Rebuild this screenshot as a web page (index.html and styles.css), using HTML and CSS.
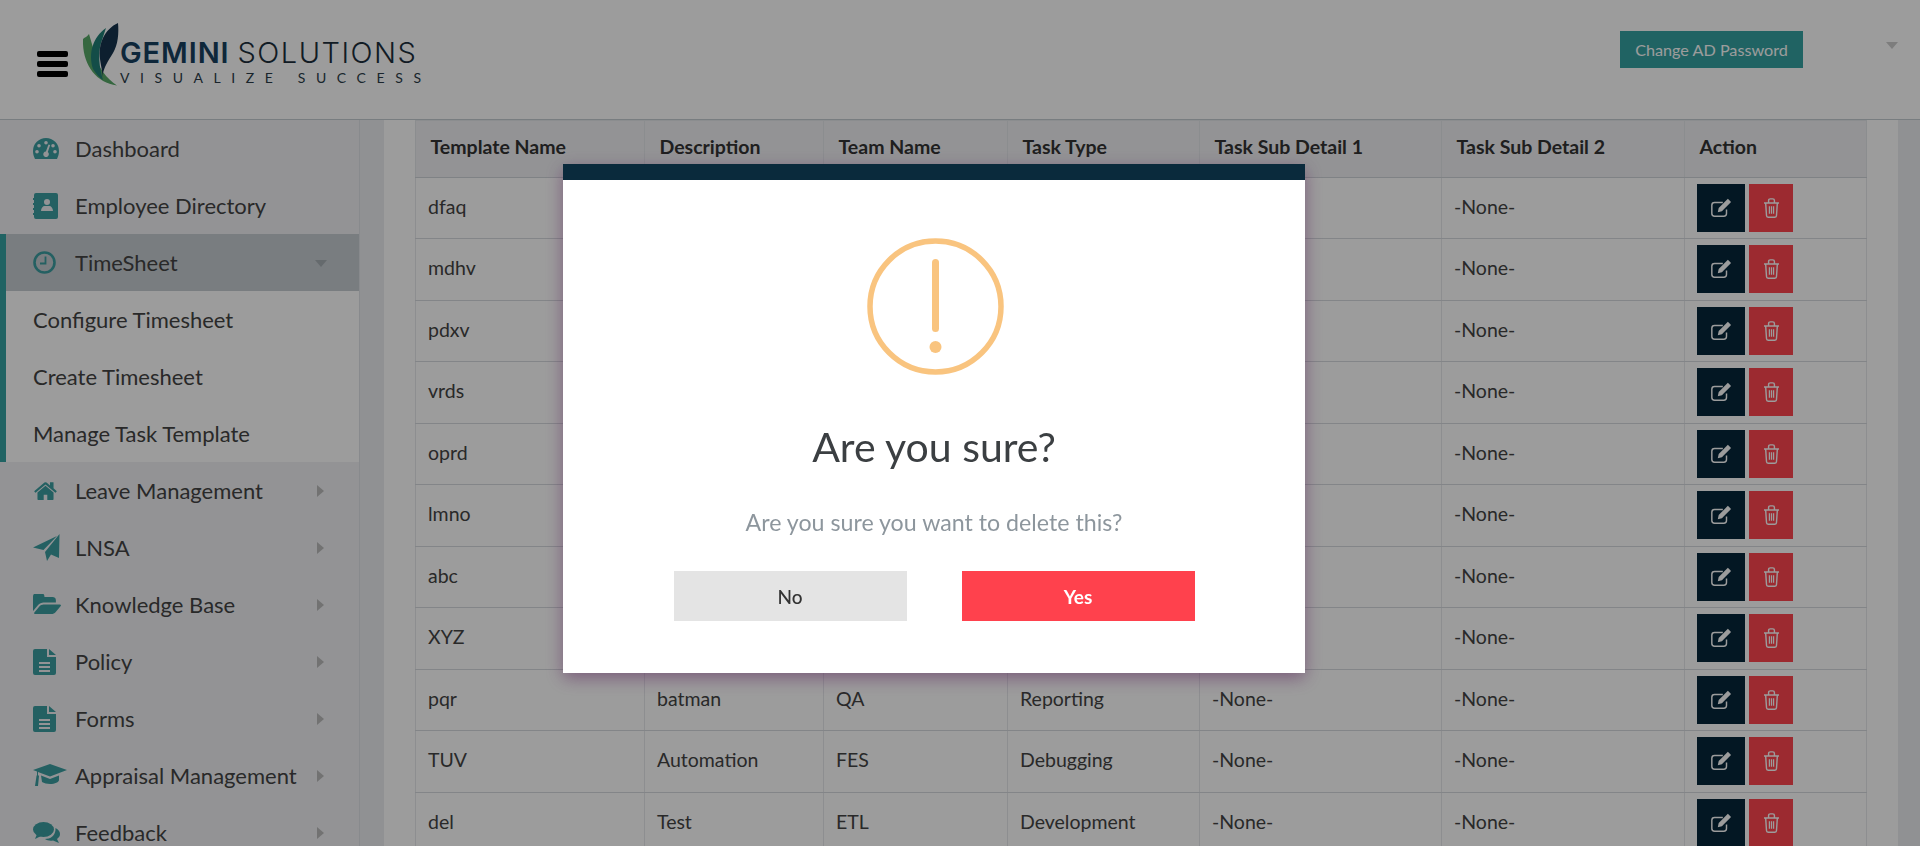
FILE: index.html
```html
<!DOCTYPE html>
<html lang="en">
<head>
  <meta charset="UTF-8">
  <title>Manage Task Template</title>
  <link rel="stylesheet" href="styles.css">
</head>
<body>
  <svg class="sprite" xmlns="http://www.w3.org/2000/svg">
    <symbol id="i-edit" viewBox="0 0 24 24">
      <path d="M18 13.500v4.500a3 3 0 0 1-3 3H5a3 3 0 0 1-3-3V9a3 3 0 0 1 3-3h9" fill="none" stroke="currentColor" stroke-width="1.600"/>
      <path d="M19.500 2l3.500 3.500L13 15.500l-4.500 1 1-4.500z" fill="currentColor"/>
    </symbol>
    <symbol id="i-trash" viewBox="0 0 20 24">
      <path d="M1 6h18M3 6l1 15a2 2 0 0 0 2 2h8a2 2 0 0 0 2-2l1-15M6.500 6V3a2 2 0 0 1 2-2h3a2 2 0 0 1 2 2v3" fill="none" stroke="currentColor" stroke-width="1.700"/>
      <path d="M7.500 10v9M10 10v9M12.500 10v9" fill="none" stroke="currentColor" stroke-width="1.500"/>
    </symbol>
    <symbol id="i-doc" viewBox="0 0 23 26">
      <path d="M2 0h12v8h9v16a2 2 0 0 1-2 2H2a2 2 0 0 1-2-2V2a2 2 0 0 1 2-2zM16 0l7 6h-7zM6 13v2h11v-2zM6 17v2h11v-2zM6 21v2h11v-2z" fill="currentColor" fill-rule="evenodd"/>
    </symbol>
  </svg>

  <header class="topbar">
    <div class="burger"><span></span><span></span><span></span></div>
    <div class="logo">
      <svg class="logo-mark" viewBox="0 0 36 64" xmlns="http://www.w3.org/2000/svg">
        <path d="M0 16C-1 40 12 60 34 62.500C24 56 14 44 11 28L6 11C4 14 2 14 0 16z" fill="#58a868"/>
        <path d="M23 5C10 14 5 30 10 46C13 51 17 55 20 57C16 44 15 30 18 20z" fill="#1f7f76"/>
        <path d="M35 0C22 6 15 20 17 36C18 44 20 49 19 54C21 44 25 38 30 30C35 22 36 10 35 0z" fill="#16344e"/>
      </svg>
      <div class="logo-text">
        <div class="logo-name"><b>GEMINI</b><span>SOLUTIONS</span></div>
        <div class="logo-tag">VISUALIZE SUCCESS</div>
      </div>
    </div>
    <a class="ad-btn">Change AD Password</a>
    <span class="user-caret"></span>
  </header>

  <div class="content">
    <nav class="sidebar">
      <a class="nav-item">
        <span class="nav-icon"><svg width="26" height="21" viewBox="0 0 26 21"><path d="M13 0a13 13 0 0 1 13 13c0 3-.8 5.500-2 8H2c-1.200-2.500-2-5-2-8A13 13 0 0 1 13 0zM13 3a1.800 1.800 0 1 0 0 3.600A1.800 1.800 0 0 0 13 3zM6 6a1.800 1.800 0 1 0 0 3.600A1.800 1.800 0 0 0 6 6zM20 6a1.800 1.800 0 1 0 0 3.600A1.800 1.800 0 0 0 20 6zM4 12a1.800 1.800 0 1 0 0 3.600A1.800 1.800 0 0 0 4 12zM22 12a1.800 1.800 0 1 0 0 3.600A1.800 1.800 0 0 0 22 12zM15.500 6.500l-2.600 7a2.800 2.800 0 1 0 1.900.6l2.400-7z" fill="currentColor" fill-rule="evenodd"/></svg></span>
        Dashboard
      </a>
      <a class="nav-item">
        <span class="nav-icon"><svg width="25" height="26" viewBox="0 0 25 26"><path d="M3 0h20a2 2 0 0 1 2 2v22a2 2 0 0 1-2 2H3a2 2 0 0 1-2-2v-2H0v-2h1v-3H0v-2h1v-3H0V10h1V7H0V5h1V2a2 2 0 0 1 2-2zM14 6a3 3 0 1 0 0 6a3 3 0 0 0 0-6zM8 18h12c0-3-2-5-3.500-5h-5C10 13 8 15 8 18z" fill="currentColor" fill-rule="evenodd"/></svg></span>
        Employee Directory
      </a>
      <a class="nav-item nav-active has-bar">
        <span class="nav-icon"><svg width="23" height="23" viewBox="0 0 23 23"><circle cx="11.500" cy="11.500" r="10" fill="none" stroke="currentColor" stroke-width="2.600"/><path d="M12.500 5.500v7H7" fill="none" stroke="currentColor" stroke-width="1.800"/></svg></span>
        TimeSheet
        <span class="caret-down"></span>
      </a>
      <a class="nav-sub has-bar">Configure Timesheet</a>
      <a class="nav-sub has-bar">Create Timesheet</a>
      <a class="nav-sub has-bar">Manage Task Template</a>
      <a class="nav-item">
        <span class="nav-icon"><svg width="25" height="20" viewBox="0 0 1792 1430"><path transform="translate(0 -170)" d="M1472 992v480q0 26-19 45t-45 19h-384v-384h-256v384h-384q-26 0-45-19t-19-45v-480q0-1 .5-3t.5-3l575-474 575 474q1 2 1 6zm223-69l-62 74q-8 9-21 11h-3q-13 0-21-7l-692-577-692 577q-12 8-24 7-13-2-21-11l-62-74q-8-10-7-23.500t11-21.500l719-599q32-26 76-26t76 26l244 204v-195q0-14 9-23t23-9h192q14 0 23 9t9 23v408l219 182q10 8 11 21.500t-7 23.500z" fill="currentColor"/></svg></span>
        Leave Management
        <span class="caret-right"></span>
      </a>
      <a class="nav-item">
        <span class="nav-icon"><svg width="27" height="27" viewBox="0 0 27 27"><path d="M26.500 0L26 24l-8-3.500-4 6.500-2-9zM24 2L10.500 16 0 13.500z" fill="currentColor"/></svg></span>
        LNSA
        <span class="caret-right"></span>
      </a>
      <a class="nav-item">
        <span class="nav-icon"><svg width="28" height="21" viewBox="0 0 1880 1410"><path transform="translate(0 -190)" d="M1879 952q0 31-31 66l-336 396q-43 51-120.500 86.500t-143.500 35.500h-1088q-34 0-60.500-13t-26.500-43q0-31 31-66l336-396q43-51 120.500-86.500t143.500-35.500h1088q34 0 60.500 13t26.500 43zm-343-344v160h-832q-94 0-197 47.500t-164 119.500l-337 396-5 6q0-4-.5-12.500t-.5-12.500v-960q0-92 66-158t158-66h320q92 0 158 66t66 158v32h544q92 0 158 66t66 158z" fill="currentColor"/></svg></span>
        Knowledge Base
        <span class="caret-right"></span>
      </a>
      <a class="nav-item">
        <span class="nav-icon"><svg width="23" height="26"><use href="#i-doc"/></svg></span>
        Policy
        <span class="caret-right"></span>
      </a>
      <a class="nav-item">
        <span class="nav-icon"><svg width="23" height="26"><use href="#i-doc"/></svg></span>
        Forms
        <span class="caret-right"></span>
      </a>
      <a class="nav-item">
        <span class="nav-icon"><svg width="34" height="23" viewBox="0 0 34 23"><path d="M17 0l17 6-17 6.500L5 8v3l1 1-1 10H2l1.500-10 .5-1V7.500L0 6z" fill="currentColor"/><path d="M8 11.500l9 3.500 9-3.500V16c0 2-4 4-9 4-3 0-6-.8-8-2z" fill="currentColor"/></svg></span>
        Appraisal Management
        <span class="caret-right"></span>
      </a>
      <a class="nav-item">
        <span class="nav-icon"><svg width="27" height="22" viewBox="0 0 27 22"><ellipse cx="10.500" cy="7.500" rx="10.500" ry="7.500" fill="currentColor"/><path d="M4 12l-2 5 6-3zM22.500 6c3 1.500 4.500 3.500 4.500 6 0 2-1 3.500-3 5l2 4-6-2.500c-3 .5-6 0-8-1.500 5 0 11-3 10.500-11z" fill="currentColor"/></svg></span>
        Feedback
        <span class="caret-right"></span>
      </a>
    </nav>

    <main class="main">
      <div class="card">
        <table class="grid">
          <thead>
            <tr>
              <th class="col-name">Template Name</th>
              <th class="col-desc">Description</th>
              <th class="col-team">Team Name</th>
              <th class="col-type">Task Type</th>
              <th class="col-sub1">Task Sub Detail 1</th>
              <th class="col-sub2">Task Sub Detail 2</th>
              <th class="col-action">Action</th>
            </tr>
          </thead>
          <tbody>
            <tr><td>dfaq</td><td></td><td></td><td></td><td></td><td>-None-</td><td class="actions"><a class="btn-edit"><svg width="22" height="22"><use href="#i-edit"/></svg></a><a class="btn-del"><svg width="17" height="20"><use href="#i-trash"/></svg></a></td></tr>
            <tr><td>mdhv</td><td></td><td></td><td></td><td></td><td>-None-</td><td class="actions"><a class="btn-edit"><svg width="22" height="22"><use href="#i-edit"/></svg></a><a class="btn-del"><svg width="17" height="20"><use href="#i-trash"/></svg></a></td></tr>
            <tr><td>pdxv</td><td></td><td></td><td></td><td></td><td>-None-</td><td class="actions"><a class="btn-edit"><svg width="22" height="22"><use href="#i-edit"/></svg></a><a class="btn-del"><svg width="17" height="20"><use href="#i-trash"/></svg></a></td></tr>
            <tr><td>vrds</td><td></td><td></td><td></td><td></td><td>-None-</td><td class="actions"><a class="btn-edit"><svg width="22" height="22"><use href="#i-edit"/></svg></a><a class="btn-del"><svg width="17" height="20"><use href="#i-trash"/></svg></a></td></tr>
            <tr><td>oprd</td><td></td><td></td><td></td><td></td><td>-None-</td><td class="actions"><a class="btn-edit"><svg width="22" height="22"><use href="#i-edit"/></svg></a><a class="btn-del"><svg width="17" height="20"><use href="#i-trash"/></svg></a></td></tr>
            <tr><td>lmno</td><td></td><td></td><td></td><td></td><td>-None-</td><td class="actions"><a class="btn-edit"><svg width="22" height="22"><use href="#i-edit"/></svg></a><a class="btn-del"><svg width="17" height="20"><use href="#i-trash"/></svg></a></td></tr>
            <tr><td>abc</td><td></td><td></td><td></td><td></td><td>-None-</td><td class="actions"><a class="btn-edit"><svg width="22" height="22"><use href="#i-edit"/></svg></a><a class="btn-del"><svg width="17" height="20"><use href="#i-trash"/></svg></a></td></tr>
            <tr><td>XYZ</td><td></td><td></td><td></td><td></td><td>-None-</td><td class="actions"><a class="btn-edit"><svg width="22" height="22"><use href="#i-edit"/></svg></a><a class="btn-del"><svg width="17" height="20"><use href="#i-trash"/></svg></a></td></tr>
            <tr><td>pqr</td><td>batman</td><td>QA</td><td>Reporting</td><td>-None-</td><td>-None-</td><td class="actions"><a class="btn-edit"><svg width="22" height="22"><use href="#i-edit"/></svg></a><a class="btn-del"><svg width="17" height="20"><use href="#i-trash"/></svg></a></td></tr>
            <tr><td>TUV</td><td>Automation</td><td>FES</td><td>Debugging</td><td>-None-</td><td>-None-</td><td class="actions"><a class="btn-edit"><svg width="22" height="22"><use href="#i-edit"/></svg></a><a class="btn-del"><svg width="17" height="20"><use href="#i-trash"/></svg></a></td></tr>
            <tr><td>del</td><td>Test</td><td>ETL</td><td>Development</td><td>-None-</td><td>-None-</td><td class="actions"><a class="btn-edit"><svg width="22" height="22"><use href="#i-edit"/></svg></a><a class="btn-del"><svg width="17" height="20"><use href="#i-trash"/></svg></a></td></tr>
          </tbody>
        </table>
      </div>
    </main>
  </div>

  <div class="backdrop"></div>

  <div class="modal">
    <div class="modal-bar"></div>
    <div class="modal-body">
      <svg class="warn-icon" width="137" height="137" viewBox="0 0 137 137">
        <circle cx="68.500" cy="68.500" r="65.500" fill="none" stroke="#f9c47f" stroke-width="5.500"/>
        <rect x="65" y="21" width="7" height="73" rx="3.500" fill="#f9c47f"/>
        <circle cx="68.500" cy="109" r="6" fill="#f9c47f"/>
      </svg>
      <h2 class="modal-title">Are you sure?</h2>
      <p class="modal-msg">Are you sure you want to delete this?</p>
      <div class="modal-btns">
        <button class="btn-no">No</button>
        <button class="btn-yes">Yes</button>
      </div>
    </div>
  </div>
</body>
</html>
```

FILE: styles.css
```css
* {
  box-sizing: border-box;
}

html, body {
  height: 100%;
  overflow: hidden;
}

body {
  margin: 0;
  font-family: "Lato", "Open Sans", sans-serif;
  font-size: 18px;
  color: #444;
  background: #fff;
}

.sprite {
  display: none;
}

/* top bar */
.topbar {
  display: flex;
  align-items: center;
  height: 120px;
  padding-left: 37px;
  border-bottom: 1px solid #c5ccd2;
  background: #fff;
}

.burger {
  display: flex;
  flex-direction: column;
  gap: 4px;
  width: 31px;
  margin-top: 9px;
}

.burger span {
  height: 6px;
  border-radius: 2px;
  background: #000;
}

.logo {
  display: flex;
  align-items: flex-start;
  margin-left: 15px;
  margin-top: -10px;
}

.logo-mark {
  width: 36px;
  height: 64px;
  flex: none;
}

.logo-text {
  margin-left: 1px;
  padding-top: 15px;
}

.logo-name {
  display: flex;
  gap: 8px;
  font-family: "Inter", "Lato", sans-serif;
  font-size: 29px;
  line-height: 30px;
  color: #1c2f3c;
}

.logo-name b {
  font-weight: 600;
  letter-spacing: 0.9px;
  color: #17405f;
}

.logo-name span {
  font-weight: 300;
  letter-spacing: 1.5px;
}

.logo-tag {
  margin-top: 3px;
  font-size: 14px;
  line-height: 14px;
  letter-spacing: 10.6px;
  white-space: nowrap;
  color: #2b3c48;
}

.ad-btn {
  display: flex;
  align-items: center;
  justify-content: center;
  width: 183px;
  height: 37px;
  margin-left: auto;
  margin-top: -20px;
  font-size: 16.200px;
  color: #fff;
  background: #35a3a3;
}

.user-caret {
  width: 0;
  height: 0;
  margin: -29px 22px 0 83px;
  border-top: 7px solid #ccc;
  border-left: 6px solid transparent;
  border-right: 6px solid transparent;
}

/* sidebar + main */
.content {
  display: flex;
  height: calc(100vh - 120px);
  overflow: hidden;
}

.sidebar {
  flex: none;
  width: 360px;
  background: #f0f1f4;
  border-right: 1px solid #dfe2e6;
}

.nav-item, .nav-sub {
  position: relative;
  display: flex;
  align-items: center;
  height: 57px;
  font-size: 22px;
}

.nav-item {
  padding-left: 33px;
}

.nav-sub {
  padding-left: 33px;
  background: #fff;
}

.nav-active {
  background: #c6ccd1;
}

.has-bar {
  border-left: 6px solid #35a3a3;
  padding-left: 27px;
}

.nav-icon {
  display: flex;
  flex: none;
  align-items: center;
  width: 42px;
  color: #3b9ea0;
}

.caret-right {
  position: absolute;
  left: 317px;
  top: 23px;
  border-left: 7px solid #bbb;
  border-top: 6px solid transparent;
  border-bottom: 6px solid transparent;
}

.caret-down {
  position: absolute;
  left: 309px;
  top: 26px;
  border-top: 7px solid #a6adb3;
  border-left: 6px solid transparent;
  border-right: 6px solid transparent;
}

.main {
  flex: 1;
  padding: 0 23px 0 24px;
  background: #ecedf1;
}

.card {
  height: 100%;
  padding: 0 31px;
  background: #fff;
}

/* table */
.grid {
  width: 1451px;
  border-collapse: collapse;
  table-layout: fixed;
  font-size: 19.500px;
}

.grid th {
  height: 56.500px;
  padding: 0 14.500px 5px;
  text-align: left;
  font-weight: 700;
  color: #333;
  background: #f0f1f4;
  border: 1px solid #e3e6ea;
  border-bottom: 1px solid #d0d5da;
}

.grid td {
  height: 61.500px;
  padding: 0 12px 3px;
  border: 1px solid #e6e8ec;
  border-bottom: 1px solid #d6dade;
}

.col-name { width: 229px; }
.col-desc { width: 179px; }
.col-team { width: 184px; }
.col-type { width: 192px; }
.col-sub1 { width: 242px; }
.col-sub2 { width: 243px; }
.col-action { width: 182px; }

.grid td.actions {
  padding: 0 0 0 12px;
  font-size: 0;
}

.btn-edit, .btn-del {
  display: inline-flex;
  align-items: center;
  justify-content: center;
  height: 48px;
  color: #fff;
  vertical-align: middle;
}

.btn-edit {
  width: 48px;
  margin-right: 4px;
  background: #05263a;
}

.btn-del {
  width: 44px;
  background: #ff454f;
}

/* confirm dialog */
.backdrop {
  position: fixed;
  inset: 0;
  background: rgba(0, 0, 0, 0.39);
}

.modal {
  position: fixed;
  left: 563px;
  top: 164px;
  width: 742px;
  height: 509px;
  background: #fff;
  box-shadow: 0 5px 16px rgba(90, 30, 90, 0.5);
}

.modal-bar {
  height: 16px;
  background: #0a2a3c;
}

.modal-body {
  display: flex;
  flex-direction: column;
  align-items: center;
  padding-top: 58px;
}

.warn-icon {
  display: block;
  margin-left: 2px;
}

.modal-title {
  margin: 47px 0 0;
  font-size: 41px;
  line-height: 50px;
  font-weight: 400;
  color: #3b3f42;
}

.modal-msg {
  margin: 35px 0 0;
  font-size: 23.200px;
  line-height: 30px;
  color: #8d969d;
}

.modal-btns {
  display: flex;
  gap: 55px;
  margin-top: 34px;
}

.btn-no, .btn-yes {
  width: 233px;
  height: 50px;
  border: none;
  font-family: inherit;
  font-size: 19px;
  font-weight: 500;
}

.btn-no {
  color: #333;
  background: #e4e4e4;
}

.btn-yes {
  font-weight: 700;
  color: #fff;
  background: #ff414d;
}
```
